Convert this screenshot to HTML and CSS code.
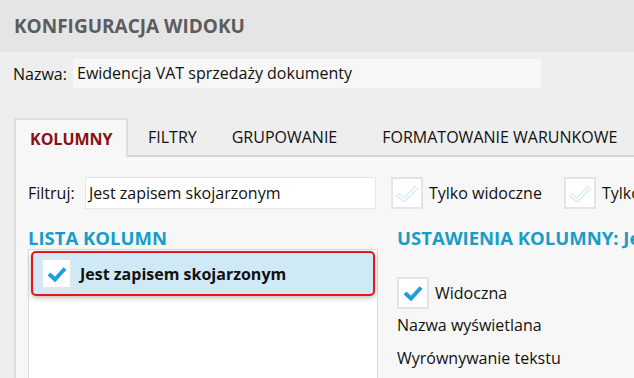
FILE: index.html
```html
<!DOCTYPE html>
<html lang="pl">

<head>
     <meta charset="UTF-8">
     <meta name="viewport" content="width=device-width, initial-scale=1.0">
     <title>Konfiguracja widoku</title>
     <link rel="stylesheet" href="styles.css">
</head>

<body>
     <div class="header">KONFIGURACJA WIDOKU</div>

     <div class="name-row">
          <span class="label">Nazwa:</span>
          <div class="name-input">Ewidencja VAT sprzedaży dokumenty</div>
     </div>

     <div class="tabs">
          <div class="tab active">KOLUMNY</div>
          <div class="tab tab-filtry">FILTRY</div>
          <div class="tab tab-grupy">GRUPOWANIE</div>
          <div class="tab tab-format">FORMATOWANIE WARUNKOWE</div>
          <div class="tab-fill"></div>
     </div>

     <div class="panel">
          <div class="filter-row">
               <span class="label">Filtruj:</span>
               <div class="filter-input">Jest zapisem skojarzonym</div>
               <div class="check light">
                    <svg width="24" height="18" viewBox="0 0 24 18">
                         <path d="M2 10 L9 16 L22 3" fill="none" stroke="#c6e9f7" stroke-width="4" />
                         <path d="M2 10 L9 16 L22 3" fill="none" stroke="#fff" stroke-width="2" />
                    </svg>
               </div>
               <span class="check-label">Tylko widoczne</span>
               <div class="check light">
                    <svg width="24" height="18" viewBox="0 0 24 18">
                         <path d="M2 10 L9 16 L22 3" fill="none" stroke="#c6e9f7" stroke-width="4" />
                         <path d="M2 10 L9 16 L22 3" fill="none" stroke="#fff" stroke-width="2" />
                    </svg>
               </div>
               <span class="check-label">Tylko zmienione</span>
          </div>

          <div class="columns">
               <div class="col-left">
                    <div class="section-title">LISTA KOLUMN</div>
                    <div class="list">
                         <div class="list-item selected">
                              <div class="check small">
                                   <svg width="20" height="16" viewBox="0 0 20 16">
                                        <path d="M2 8 L8 13.5 L18 2.5" fill="none" stroke="#1ba1de" stroke-width="4" />
                                   </svg>
                              </div>
                              <span>Jest zapisem skojarzonym</span>
                         </div>
                    </div>
               </div>

               <div class="col-right">
                    <div class="section-title">USTAWIENIA KOLUMNY: Jest zapisem skojarzonym</div>
                    <div class="setting check-row">
                         <div class="check">
                              <svg width="20" height="16" viewBox="0 0 20 16">
                                   <path d="M2 8 L8 13.5 L18 2.5" fill="none" stroke="#1ba1de" stroke-width="4" />
                              </svg>
                         </div>
                         <span class="check-label">Widoczna</span>
                    </div>
                    <div class="setting">Nazwa wyświetlana</div>
                    <div class="setting">Wyrównywanie tekstu</div>
               </div>
          </div>
     </div>
</body>

</html>
```

FILE: styles.css
```css
body {
     margin: 0;
     background: #eeeeee;
     font-family: "Open Sans", "Noto Sans", sans-serif;
     font-size: 16px;
     color: #111;
     overflow: hidden;
     height: 378px;
}

.header {
     height: 52px;
     background: #e5e5e5;
     padding-left: 14px;
     line-height: 52px;
     font-size: 19px;
     font-weight: 700;
     color: #5c5c5c;
}

.name-row {
     display: flex;
     align-items: center;
     padding: 7px 0 0 13px;
}

.name-row .label {
     width: 60px;
}

.name-input {
     width: 464px;
     height: 29px;
     line-height: 29px;
     background: #f7f7f7;
     padding-left: 4px;
}

.tabs {
     display: flex;
     margin-top: 30px;
     height: 39px;
     padding-left: 14px;
     white-space: nowrap;
}

.tab {
     line-height: 38px;
     border-bottom: 2px solid #d4d4d4;
}

.tab-filtry {
     padding: 0 15px 0 20px;
}

.tab-grupy {
     padding: 0 22px 0 20px;
}

.tab-format {
     padding: 0 14px 0 23px;
}

.tab.active {
     width: 114px;
     box-sizing: border-box;
     padding: 0 0 0 14px;
     background: #f7f7f7;
     border: 2px solid #dedede;
     border-bottom: none;
     font-weight: 700;
     color: #8c1010;
}

.tab-fill {
     flex: 1;
     border-bottom: 2px solid #d4d4d4;
}

.panel {
     margin-left: 14px;
     border-left: 2px solid #dedede;
     background: #f7f7f7;
     height: 201px;
     padding: 20px 0 0 12px;
     overflow: hidden;
}

.filter-row {
     display: flex;
     align-items: center;
     white-space: nowrap;
}

.filter-row .label {
     width: 57px;
     flex-shrink: 0;
}

.filter-input {
     width: 286px;
     height: 30px;
     line-height: 30px;
     background: #fff;
     border: 1px solid #e6e6e6;
     padding-left: 3px;
     margin-right: 15px;
     flex-shrink: 0;
}

.check {
     width: 28px;
     height: 28px;
     border: 2px solid #e4e4e4;
     background: #fff;
     display: flex;
     align-items: center;
     justify-content: center;
     flex-shrink: 0;
}

.check-label {
     margin-left: 6px;
     margin-right: 22px;
}

.columns {
     display: flex;
     margin-top: 17px;
}

.col-left {
     width: 350px;
     flex-shrink: 0;
}

.col-right {
     margin-left: 19px;
     white-space: nowrap;
}

.section-title {
     font-size: 18.5px;
     font-weight: 700;
     color: #1a9cc9;
     line-height: 23px;
}

.list {
     height: 127px;
     background: #fff;
     border: 1px solid #dcdcdc;
     border-bottom: none;
     padding: 1px 2px;
}

.list-item {
     display: flex;
     align-items: center;
     height: 41px;
     padding-left: 8px;
}

.list-item.selected {
     background: #cfeaf6;
     border: 2px solid #e8141c;
     border-radius: 5px;
     box-shadow: 0 2px 5px rgba(0, 0, 0, 0.25);
}

.list-item span {
     margin-left: 8px;
     font-weight: 700;
}

.check.small {
     width: 27px;
     height: 27px;
}

.setting {
     height: 33px;
     line-height: 33px;
}

.check-row {
     display: flex;
     align-items: center;
     margin-top: 28px;
     height: 32px;
}

.check-row .check-label {
     margin-left: 6px;
}
```
